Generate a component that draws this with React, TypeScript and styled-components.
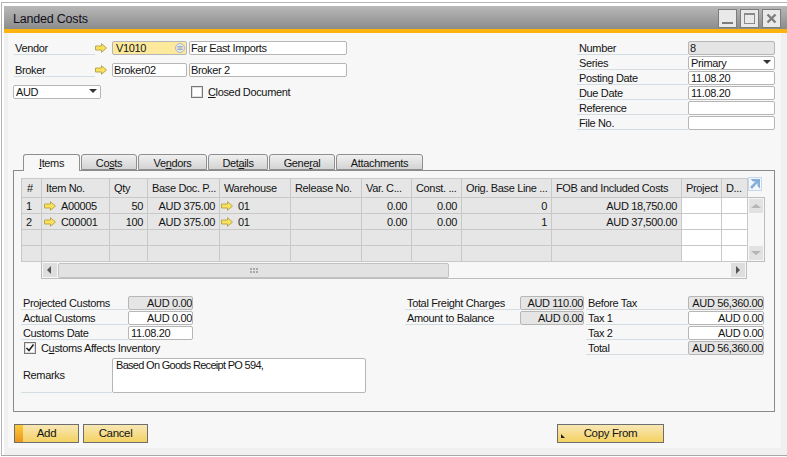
import React from "react";
import styled, { createGlobalStyle } from "styled-components";

const Global = createGlobalStyle`
  html, body { margin: 0; padding: 0; background: #fff; }
  body { font-family: "Liberation Sans", Tahoma, sans-serif; font-size: 11px; letter-spacing: -0.35px; color: #141414; }
  * { box-sizing: border-box; }
`;

const Page = styled.div`
  width: 787px; height: 457px; overflow: hidden; background: #fff;
  padding: 2px 0 1px 1px;
`;
const Frame = styled.div`
  height: 100%;
  border-top: 1px solid #b5b5b5; border-left: 1px solid #b5b5b5; border-bottom: 1px solid #a8a8a8;
  padding: 3px 0 0 2px; display: flex; flex-direction: column;
`;
const TitleBar = styled.div`
  height: 23px; flex: none; display: flex; align-items: center; justify-content: space-between;
  padding: 0 6px 0 9px; background: linear-gradient(#b9b9b9, #8b8b8b);
`;
const Title = styled.span` font-size: 12.5px; letter-spacing: -0.2px; color: #10101c; padding-top: 2px; `;
const WinButtons = styled.div` display: flex; gap: 3px; margin-top: 1px; `;
const WinButton = styled.div`
  width: 19px; height: 19px; border: 1px solid #7c7c7c; background: #e9e9e9;
  display: flex; align-items: center; justify-content: center;
`;
const Accent = styled.div` height: 4px; flex: none; background: #fdb40f; `;
const Body = styled.div`
  flex: 1; min-height: 0; background: #f0f0f0; padding: 0 6px 7px 4px; display: flex;
`;
const Content = styled.div`
  flex: 1; background: #f7f7f7; padding: 8px 6px 0 5px;
`;
const Top = styled.div` height: 113px; display: flex; justify-content: space-between; `;
const LeftHead = styled.div` width: 334px; display: flex; flex-direction: column; `;
const HeadRow = styled.div` display: flex; height: 14px; margin-bottom: 8px; padding-left: 1px; align-items: center; `;
const HeadLabel = styled.div`
  width: 81px; height: 14px; line-height: 14px; padding-left: 1px; flex: none;
  border-bottom: 1px solid #d4dde2;
`;
const ArrowSlot = styled.div` width: 17px; height: 14px; flex: none; display: flex; align-items: center; `;
const Field = styled.div<{ $w: number; $tone?: "white" | "gray" | "yellow"; $right?: boolean; $inset?: number }>`
  width: ${(p) => p.$w}px; height: 14px; line-height: 12px; flex: none; position: relative;
  border: 1px solid #b6b6b6; border-radius: 2px; white-space: nowrap; overflow: hidden;
  padding: 0 ${(p) => (p.$right ? 0 : 1)}px 0 ${(p) => p.$inset ?? 1}px;
  text-align: ${(p) => (p.$right ? "right" : "left")};
  background: ${(p) => (p.$tone === "gray" ? "#e5e5e5" : p.$tone === "yellow" ? "#fce99c" : "#fff")};
`;
const LookupIcon = styled.svg` position: absolute; right: 1px; top: 1px; `;
const Gap = styled.div<{ $w: number }>` width: ${(p) => p.$w}px; flex: none; `;
const SelectRow = styled.div` display: flex; align-items: center; height: 14px; `;
const Select = styled.div<{ $w: number }>`
  width: ${(p) => p.$w}px; height: 14px; line-height: 12px; border: 1px solid #b6b6b6; border-radius: 2px;
  background: #fff; padding: 0 3px 0 2px; display: flex; justify-content: space-between; align-items: center; flex: none;
`;
const Caret = styled.i`
  width: 0; height: 0; border-left: 4px solid transparent; border-right: 4px solid transparent;
  border-top: 4px solid #333; margin-top: -2px;
`;
const Check = styled.div`
  width: 12px; height: 12px; flex: none; background: #fff; border: 1px solid #777;
  box-shadow: inset 0 0 0 1px #ddd; display: flex; align-items: center; justify-content: center;
`;
const CheckLabel = styled.span` margin-left: 5px; white-space: nowrap; `;
const M = styled.span` text-decoration: underline; `;

const RightHead = styled.div` width: 198px; display: flex; flex-direction: column; gap: 1px; `;
const FormRow = styled.div` display: flex; height: 14px; `;
const FormLabel = styled.div<{ $w: number }>`
  width: ${(p) => p.$w}px; height: 14px; line-height: 14px; padding-left: 2px; flex: none; white-space: nowrap;
  border-bottom: 1px solid #d4dde2;
`;

const Tabs = styled.div` display: flex; gap: 1px; padding-left: 10px; height: 16px; position: relative; z-index: 1; `;
const Tab = styled.div<{ $w: number; $on?: boolean }>`
  width: ${(p) => p.$w}px; height: ${(p) => (p.$on ? 17 : 16)}px; text-align: center; line-height: 16px; flex: none;
  border: 1px solid #8f8f8f; border-radius: 3px 3px 0 0;
  ${(p) => (p.$on ? "border-bottom: 0; background: #f7f7f7;" : "background: linear-gradient(#f0f0f0, #d3d3d3);")}
`;
const Panel = styled.div`
  width: 762px; height: 242px; border: 1px solid #8a8a8a; padding: 7px 0 0 7px; background: #f7f7f7;
`;
const GridWrap = styled.div` display: flex; height: 101px; `;
const TableCol = styled.div` width: 727px; flex: none; `;
const Table = styled.div` border-left: 1px solid #c8c8c8; border-top: 1px solid #c8c8c8; `;
const TRow = styled.div<{ $h: number }>` display: flex; height: ${(p) => p.$h}px; `;
const Cell = styled.div<{ $w: number; $right?: boolean; $white?: boolean; $head?: boolean; $pad?: number }>`
  width: ${(p) => p.$w}px; flex: none; height: 100%; display: flex; align-items: center;
  justify-content: ${(p) => (p.$right ? "flex-end" : "flex-start")};
  padding: 0 ${(p) => (p.$right ? 4 : 0)}px 0 ${(p) => p.$pad ?? 4}px;
  border-right: 1px solid #c8c8c8; border-bottom: 1px solid #c8c8c8; white-space: nowrap; overflow: hidden;
  background: ${(p) => (p.$white ? "#fff" : "#e6e6e6")};
`;
const CellText = styled.span` margin-left: 5px; `;
const HScroll = styled.div`
  margin-left: 20px; width: 706px; height: 17px; border-right: 1px solid #bdbdbd; border-bottom: 1px solid #bdbdbd;
  border-left: 1px solid #bdbdbd; display: flex; align-items: center; padding: 0 1px 0 1px;
`;
const ScrollBtn = styled.div<{ $soft?: boolean }>`
  width: 14px; height: 14px; flex: none; background: #dedede; display: flex; align-items: center; justify-content: center;
  ${(p) => p.$soft && "background: #e2e2e2;"}
`;
const Thumb = styled.div`
  width: 391px; height: 15px; margin-left: 1px; border: 1px solid #c2c2c2; border-radius: 2px; background: #e2e2e2;
  display: flex; align-items: center; justify-content: center; flex: none;
`;
const Track = styled.div` flex: 1; `;
const VCol = styled.div` width: 17px; flex: none; display: flex; flex-direction: column; `;
const ExpandBox = styled.div`
  width: 14px; height: 14px; margin-top: -1px; margin-bottom: 6px; margin-left: 0;
  border: 1px solid #c3d8ec; background: #f4f8fb; display: flex; align-items: center; justify-content: center;
`;
const VScroll = styled.div`
  height: 65px; border-top: 1px solid #bdbdbd; border-right: 1px solid #bdbdbd; border-bottom: 1px solid #bdbdbd;
  display: flex; flex-direction: column; justify-content: space-between; padding: 1px 0 1px 1px;
`;

const Lower = styled.div` display: flex; margin-top: 17px; `;
const LowerLeft = styled.div` width: 384px; flex: none; display: flex; flex-direction: column; gap: 1px; `;
const LowerMid = styled.div` width: 181px; flex: none; display: flex; flex-direction: column; gap: 1px; `;
const LowerRight = styled.div` flex: none; display: flex; flex-direction: column; gap: 1px; `;
const CheckRow = styled.div` display: flex; align-items: center; height: 14px; padding-left: 3px; `;
const RemarksRow = styled.div` display: flex; margin-top: 2px; height: 35px; `;
const RemarksLabel = styled.div`
  width: 91px; flex: none; padding: 11px 0 0 2px; border-bottom: 1px solid #d4dde2;
`;
const RemarksBox = styled.div`
  width: 254px; height: 35px; background: #fff; border: 1px solid #b6b6b6; border-radius: 2px; padding: 0 3px;
  line-height: 12px; letter-spacing: -0.7px;
`;

const Footer = styled.div` display: flex; margin-top: 12px; padding-left: 1px; gap: 4px; `;
const Button = styled.div<{ $w: number; $gapLeft?: number }>`
  width: ${(p) => p.$w}px; height: 19px; line-height: 17px; text-align: center; position: relative; flex: none;
  margin-left: ${(p) => p.$gapLeft ?? 0}px;
  border: 1px solid #6e6e6e; background: linear-gradient(#f8e7b6, #f4d262); font-size: 11.5px;
`;
const Lamp = styled.i`
  position: absolute; left: 0; top: 0; bottom: 0; width: 8px; background: linear-gradient(#fbc93c, #ee961c);
`;
const Corner = styled.i`
  position: absolute; left: 3px; bottom: 4px; width: 0; height: 0;
  border-left: 4px solid #222; border-top: 4px solid transparent;
`;

const Arrow = () => (
  <svg width="12" height="10" viewBox="0 0 12 10">
    <path d="M.5 3H6.5V.7L11.5 5 6.5 9.3V7H.5Z" fill="#fbe05a" stroke="#b9a650" strokeWidth="1" />
  </svg>
);

const Tri = ({ dir, color }: { dir: "l" | "r" | "u" | "d"; color: string }) => {
  const d = { l: "M6 1V9L2 5Z", r: "M3 1V9L7 5Z", u: "M1 7H11L6 3Z", d: "M1 3H11L6 7Z" }[dir];
  const w = dir === "u" || dir === "d" ? 12 : 10;
  return (
    <svg width={w} height="10" viewBox={`0 0 ${w} 10`}>
      <path d={d} fill={color} />
    </svg>
  );
};

const widths = [20, 68, 38, 72, 71, 71, 50, 50, 90, 130, 40, 26];
const heads = ["#", "Item No.", "Qty", "Base Doc. P...", "Warehouse", "Release No.", "Var. C...", "Const. ...", "Orig. Base Line ...", "FOB and Included Costs", "Project", "D..."];

type Row = { n: string; item: string; qty: string; wh: string; base: string; fob: string };
const rows: (Row | null)[] = [
  { n: "1", item: "A00005", qty: "50", wh: "01", base: "0", fob: "AUD 18,750.00" },
  { n: "2", item: "C00001", qty: "100", wh: "01", base: "1", fob: "AUD 37,500.00" },
  null,
  null,
];

const DataRow = ({ r }: { r: Row | null }) => (
  <TRow $h={16}>
    <Cell $w={widths[0]} $pad={4}>{r?.n}</Cell>
    <Cell $w={widths[1]} $pad={2}>{r && <><Arrow /><CellText>{r.item}</CellText></>}</Cell>
    <Cell $w={widths[2]} $right>{r?.qty}</Cell>
    <Cell $w={widths[3]} $right>{r && "AUD 375.00"}</Cell>
    <Cell $w={widths[4]} $pad={1}>{r && <><Arrow /><CellText>{r.wh}</CellText></>}</Cell>
    <Cell $w={widths[5]} />
    <Cell $w={widths[6]} $right>{r && "0.00"}</Cell>
    <Cell $w={widths[7]} $right>{r && "0.00"}</Cell>
    <Cell $w={widths[8]} $right>{r?.base}</Cell>
    <Cell $w={widths[9]} $right>{r?.fob}</Cell>
    <Cell $w={widths[10]} $white />
    <Cell $w={widths[11]} $white />
  </TRow>
);

export default function App() {
  return (
    <Page>
      <Global />
      <Frame>
        <TitleBar>
          <Title>Landed Costs</Title>
          <WinButtons>
            <WinButton>
              <svg width="13" height="13" viewBox="0 0 13 13"><rect x="1" y="10" width="11" height="2" fill="#7d7d7d" /></svg>
            </WinButton>
            <WinButton>
              <svg width="13" height="13" viewBox="0 0 13 13"><rect x="1.5" y="1.5" width="10" height="10" fill="none" stroke="#8a8a8a" /><rect x="1" y="1" width="11" height="2" fill="#8a8a8a" /></svg>
            </WinButton>
            <WinButton>
              <svg width="13" height="13" viewBox="0 0 13 13"><path d="M2.5 2.5 10.5 10.5M10.5 2.5 2.5 10.5" stroke="#7d7d7d" strokeWidth="2.4" /></svg>
            </WinButton>
          </WinButtons>
        </TitleBar>
        <Accent />
        <Body>
          <Content>
            <Top>
              <LeftHead>
                <HeadRow>
                  <HeadLabel>Vendor</HeadLabel>
                  <ArrowSlot><Arrow /></ArrowSlot>
                  <Field $w={75} $tone="yellow" $inset={3}>
                    V1010
                    <LookupIcon width="10" height="10" viewBox="0 0 10 10">
                      <circle cx="5" cy="5" r="4.5" fill="#e6e6e0" stroke="#aeb9c6" />
                      <path d="M2.5 3.5H7.5M2.5 5H7.5M2.5 6.5H7.5" stroke="#8f9db0" strokeWidth=".8" />
                    </LookupIcon>
                  </Field>
                  <Gap $w={2} />
                  <Field $w={158}>Far East Imports</Field>
                </HeadRow>
                <HeadRow>
                  <HeadLabel>Broker</HeadLabel>
                  <ArrowSlot><Arrow /></ArrowSlot>
                  <Field $w={75}>Broker02</Field>
                  <Gap $w={2} />
                  <Field $w={158}>Broker 2</Field>
                </HeadRow>
                <SelectRow>
                  <Select $w={88}>AUD<Caret /></Select>
                  <Gap $w={90} />
                  <Check />
                  <CheckLabel><M>C</M>losed Document</CheckLabel>
                </SelectRow>
              </LeftHead>
              <RightHead>
                <FormRow><FormLabel $w={111}>Number</FormLabel><Field $w={87} $tone="gray">8</Field></FormRow>
                <FormRow><FormLabel $w={111}>Series</FormLabel><Select $w={87}>Primary<Caret /></Select></FormRow>
                <FormRow><FormLabel $w={111}>Posting Date</FormLabel><Field $w={87} $inset={2}>11.08.20</Field></FormRow>
                <FormRow><FormLabel $w={111}>Due Date</FormLabel><Field $w={87} $inset={2}>11.08.20</Field></FormRow>
                <FormRow><FormLabel $w={111}>Reference</FormLabel><Field $w={87} /></FormRow>
                <FormRow><FormLabel $w={111}>File No.</FormLabel><Field $w={87} /></FormRow>
              </RightHead>
            </Top>
            <Tabs>
              <Tab $w={57} $on><M>I</M>tems</Tab>
              <Tab $w={56}>Co<M>s</M>ts</Tab>
              <Tab $w={69}>Ve<M>n</M>dors</Tab>
              <Tab $w={60}>Det<M>a</M>ils</Tab>
              <Tab $w={66}>Gene<M>r</M>al</Tab>
              <Tab $w={87}>Attachments</Tab>
            </Tabs>
            <Panel>
              <GridWrap>
                <TableCol>
                  <Table>
                    <TRow $h={19}>
                      {heads.map((h, i) => (
                        <Cell key={i} $w={widths[i]} $pad={i === 0 ? 5 : 4}>{h}</Cell>
                      ))}
                    </TRow>
                    {rows.map((r, i) => <DataRow key={i} r={r} />)}
                  </Table>
                  <HScroll>
                    <ScrollBtn><Tri dir="l" color="#555" /></ScrollBtn>
                    <Thumb>
                      <svg width="8" height="5" viewBox="0 0 8 5">
                        {[0, 3, 6].map((x) => [0, 3].map((y) => <rect key={`${x}${y}`} x={x} y={y} width="2" height="2" fill="#a8a8a8" />))}
                      </svg>
                    </Thumb>
                    <Track />
                    <ScrollBtn><Tri dir="r" color="#555" /></ScrollBtn>
                  </HScroll>
                </TableCol>
                <VCol>
                  <ExpandBox>
                    <svg width="12" height="12" viewBox="0 0 12 12">
                      <path d="M1.5 1H11V10.5L8.5 8V5L3 11 1 9 6.5 3.5H4Z" fill="#86aed8" />
                    </svg>
                  </ExpandBox>
                  <VScroll>
                    <ScrollBtn $soft><Tri dir="u" color="#b5b5b5" /></ScrollBtn>
                    <ScrollBtn $soft><Tri dir="d" color="#b5b5b5" /></ScrollBtn>
                  </VScroll>
                </VCol>
              </GridWrap>
              <Lower>
                <LowerLeft>
                  <FormRow><FormLabel $w={107}>Projected Customs</FormLabel><Field $w={65} $tone="gray" $right>AUD 0.00</Field></FormRow>
                  <FormRow><FormLabel $w={107}>Actual Customs</FormLabel><Field $w={65} $right>AUD 0.00</Field></FormRow>
                  <FormRow><FormLabel $w={107}>Customs Date</FormLabel><Field $w={65} $inset={2}>11.08.20</Field></FormRow>
                  <CheckRow>
                    <Check>
                      <svg width="10" height="10" viewBox="0 0 10 10"><path d="M1.5 5 4 7.5 8.5 1.5" fill="none" stroke="#222" strokeWidth="1.6" /></svg>
                    </Check>
                    <CheckLabel>C<M>u</M>stoms Affects Inventory</CheckLabel>
                  </CheckRow>
                  <RemarksRow>
                    <RemarksLabel>Remarks</RemarksLabel>
                    <RemarksBox>Based On Goods Receipt PO 594,</RemarksBox>
                  </RemarksRow>
                </LowerLeft>
                <LowerMid>
                  <FormRow><FormLabel $w={115}>Total Freight Charges</FormLabel><Field $w={64} $tone="gray" $right>AUD 110.00</Field></FormRow>
                  <FormRow><FormLabel $w={115}>Amount to Balance</FormLabel><Field $w={64} $tone="gray" $right>AUD 0.00</Field></FormRow>
                </LowerMid>
                <LowerRight>
                  <FormRow><FormLabel $w={102}>Before Tax</FormLabel><Field $w={76} $tone="gray" $right>AUD 56,360.00</Field></FormRow>
                  <FormRow><FormLabel $w={102}>Tax 1</FormLabel><Field $w={76} $right>AUD 0.00</Field></FormRow>
                  <FormRow><FormLabel $w={102}>Tax 2</FormLabel><Field $w={76} $right>AUD 0.00</Field></FormRow>
                  <FormRow><FormLabel $w={102}>Total</FormLabel><Field $w={76} $tone="gray" $right>AUD 56,360.00</Field></FormRow>
                </LowerRight>
              </Lower>
            </Panel>
            <Footer>
              <Button $w={65}><Lamp />Add</Button>
              <Button $w={65}>Cancel</Button>
              <Button $w={107} $gapLeft={405}><Corner />Copy From</Button>
            </Footer>
          </Content>
        </Body>
      </Frame>
    </Page>
  );
}
